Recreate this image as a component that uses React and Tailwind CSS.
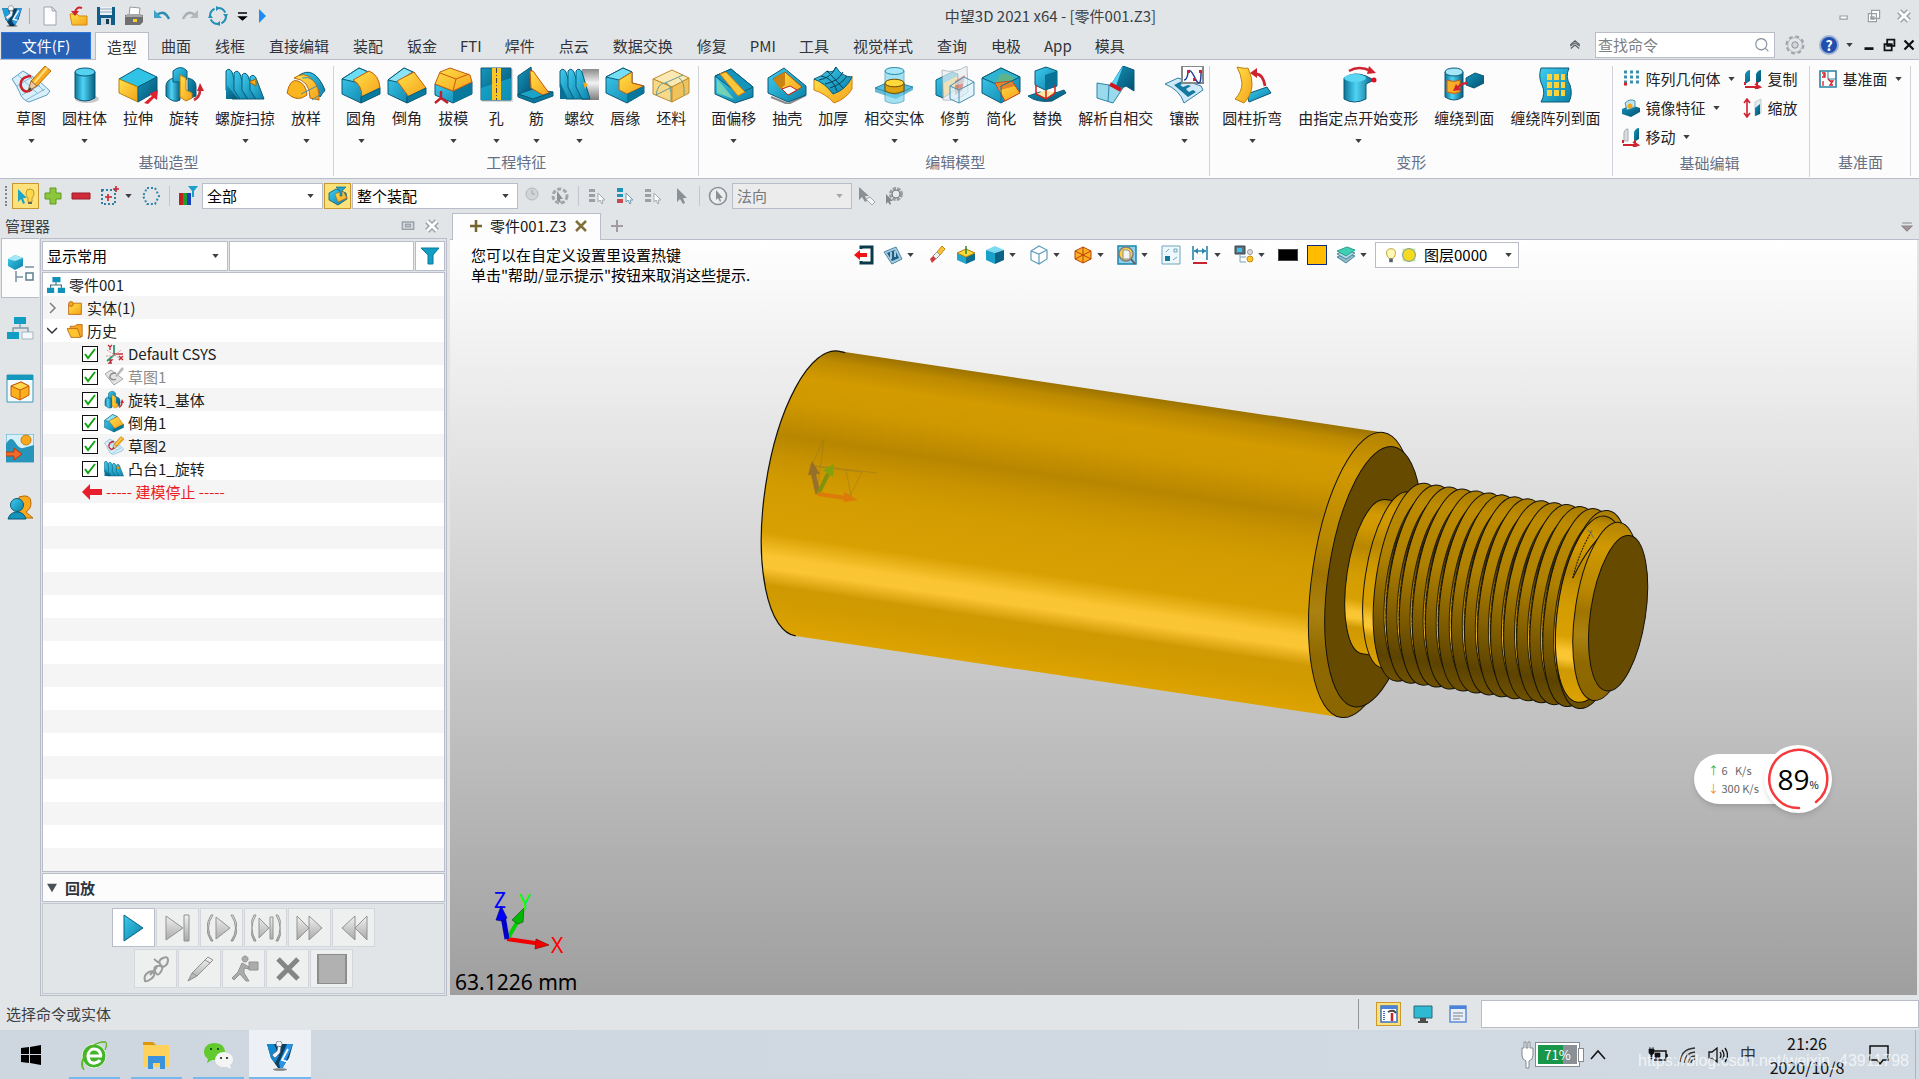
import { useState } from 'react';

// Shared gradients, referenced by every icon and by the model
function SharedDefs() {
  return (
    <svg className="absolute size-0" aria-hidden="true">
      <defs>
        <linearGradient id="blue" x1="0" y1="0" x2="1" y2="1">
          <stop offset="0" stopColor="#3fcdf0" />
          <stop offset="1" stopColor="#0a7fa6" />
        </linearGradient>
        <linearGradient id="blueDark" x1="0" y1="0" x2="1" y2="1">
          <stop offset="0" stopColor="#1596bd" />
          <stop offset="1" stopColor="#03506f" />
        </linearGradient>
        <linearGradient id="cyl" x1="0" y1="0" x2="1" y2="0">
          <stop offset="0" stopColor="#0c7499" />
          <stop offset="0.4" stopColor="#4fd4f5" />
          <stop offset="1" stopColor="#065f80" />
        </linearGradient>
        <linearGradient id="gold" x1="0" y1="0" x2="1" y2="1">
          <stop offset="0" stopColor="#ffe14a" />
          <stop offset="1" stopColor="#f5a21c" />
        </linearGradient>
        <linearGradient id="metal" x1="0" y1="0" x2="0" y2="1">
          <stop offset="0" stopColor="#8a8a8a" />
          <stop offset="0.45" stopColor="#f2f2f2" />
          <stop offset="1" stopColor="#7c7c7c" />
        </linearGradient>
        <linearGradient id="grayBtn" x1="0" y1="0" x2="0" y2="1">
          <stop offset="0" stopColor="#f2f2f2" />
          <stop offset="1" stopColor="#a8a8a8" />
        </linearGradient>
        <linearGradient id="body" x1="0" y1="0" x2="0" y2="1">
          <stop offset="0" stopColor="#9c7300" />
          <stop offset="0.04" stopColor="#bd8a00" />
          <stop offset="0.11" stopColor="#d39b00" />
          <stop offset="0.2" stopColor="#cf9800" />
          <stop offset="0.318" stopColor="#b88700" />
          <stop offset="0.4" stopColor="#c89300" />
          <stop offset="0.5" stopColor="#d39c00" />
          <stop offset="0.66" stopColor="#d9a002" />
          <stop offset="0.74" stopColor="#fac532" />
          <stop offset="0.78" stopColor="#fbc634" />
          <stop offset="0.84" stopColor="#cf9903" />
          <stop offset="0.9" stopColor="#d29b00" />
          <stop offset="1" stopColor="#dda300" />
        </linearGradient>
        <linearGradient id="chamfer" x1="0" y1="0" x2="0" y2="1">
          <stop offset="0" stopColor="#b38300" />
          <stop offset="0.15" stopColor="#d09900" />
          <stop offset="0.4" stopColor="#b88700" />
          <stop offset="0.52" stopColor="#a07400" />
          <stop offset="0.65" stopColor="#ab8210" />
          <stop offset="0.8" stopColor="#8f6900" />
          <stop offset="1" stopColor="#8b6600" />
        </linearGradient>
        <linearGradient id="flank" x1="0" y1="0" x2="0" y2="1">
          <stop offset="0" stopColor="#a97c00" />
          <stop offset="0.1" stopColor="#bd8b00" />
          <stop offset="0.4" stopColor="#ae8000" />
          <stop offset="0.6" stopColor="#8c6600" />
          <stop offset="0.88" stopColor="#5c4300" />
          <stop offset="1" stopColor="#6f5100" />
        </linearGradient>
        <linearGradient id="groove" x1="0" y1="0" x2="0" y2="1">
          <stop offset="0" stopColor="#6b5000" />
          <stop offset="0.3" stopColor="#3d2e00" />
          <stop offset="0.6" stopColor="#c08c00" />
          <stop offset="0.75" stopColor="#fbc634" />
          <stop offset="0.88" stopColor="#b28200" />
          <stop offset="1" stopColor="#3b2b00" />
        </linearGradient>
      </defs>
    </svg>
  );
}

const EDGE = '#0b5a78';

// Large ribbon drawings, all on a 40 x 38 grid
const BIG = {
  sketch: (
    <>
      <path d="M1 13 12 5l15 9 12 11-3 4-18 7q-7-2-9-9Q6 20 1 13Z" fill="#d9eff9" stroke="#5c9fc2" />
      <path d="m7 9 19 18M15 7l18 18M6 20l15-9M11 29l18-10M15 34l19-11" stroke="#7fb9d6" fill="none" />
      <path d="M20 10Q8 11 10 21q4 8 11 2" fill="none" stroke="#cf1f2a" strokeWidth="2.6" />
      <path d="m34 0 6 5-14 15-6-5Z" fill="#f8a81d" stroke="#b86f08" />
      <path d="m36 2-13 15" stroke="#ffdf7c" strokeWidth="2" />
      <path d="m20 15 6 5-9 5Z" fill="#f0c79a" stroke="#9a6b3a" />
      <path d="m19 21 1 2-3 2Z" fill="#222" />
    </>
  ),
  cylinder: (
    <>
      <ellipse cx="22" cy="33" rx="12" ry="4" fill="#0003" />
      <path d="M10 6v26q10 6 20 0V6Z" fill="url(#cyl)" stroke={EDGE} />
      <ellipse cx="20" cy="6" rx="10" ry="4" fill="#55d2f0" stroke={EDGE} />
    </>
  ),
  extrude: (
    <>
      <path d="M1 13 20 2l19 9-19 10Z" fill="#31c3e6" stroke={EDGE} />
      <path d="m1 13 19 8v15L1 27Z" fill="url(#gold)" stroke="#b8860b" />
      <path d="m20 21 19-10v14L20 36Z" fill="url(#blueDark)" stroke={EDGE} />
      <path d="m26 37 8-7-3-2 9-4-1 10-3-2-6 6Z" fill="#dd2230" />
    </>
  ),
  revolve: (
    <>
      <path d="M10 12Q2 14 2 20v10q8 8 14 4V12Z" fill="url(#cyl)" stroke={EDGE} />
      <path d="M24 12q8 2 8 8v10l-8 3Z" fill="url(#blueDark)" stroke={EDGE} />
      <path d="M9 5q8-7 14 0v8l-5 3H9Z" fill="url(#blue)" stroke={EDGE} />
      <path d="m16 9 6 3v12l6 3v5l-6 3-6-4Z" fill="url(#gold)" stroke="#c07a08" />
      <path d="M30 34q6-3 6-10" fill="none" stroke="#c9303a" strokeWidth="2.6" />
      <path d="m33 25 3-8 4 8Z" fill="#d3202b" />
    </>
  ),
  sweep: (
    <>
      {[0, 8, 16, 24].map((x) => (
        <path key={x} d={`M${1 + x} ${5 + x / 4}q3-4 6 1l8 ${27 - x / 4}h-8l-6-9Z`} fill="url(#blue)" stroke={EDGE} />
      ))}
      <path d="M1 18v15h12Z" fill="url(#blueDark)" />
      <path d="m24 16 7-3v7Z" fill="#f8a81d" stroke="#a56505" />
    </>
  ),
  loft: (
    <>
      <path d="M12 10q16-12 27 14l-5 7q-10-18-22-21Z" fill="url(#blue)" stroke={EDGE} />
      <path d="M8 12q10-7 18 1t7 21l-9-2Q24 14 8 12Z" fill="url(#gold)" stroke="#b9680a" />
      <path d="M1 27Q4 12 12 15t9 14q-10 8-20-2Z" fill="#fbb51f" stroke="#b9680a" />
      <path d="M16 12q12-4 20 16M15 28l20-10M26 34l13-9" fill="none" stroke="#3c8fae" />
    </>
  ),
  fillet: (
    <>
      <path d="M1 13 18 2l12 5-9 8-1 22L1 28Z" fill="url(#blue)" stroke={EDGE} />
      <path d="M1 13 18 2l14 6-18 8Z" fill="#6adcf3" stroke={EDGE} />
      <path d="M12 14 28 5q10 4 11 17l-18 9q0-12-9-17Z" fill="url(#gold)" stroke="#c8590b" />
      <path d="m20 31 19-9v6L20 37Z" fill="#077a9f" stroke={EDGE} />
    </>
  ),
  chamfer: (
    <>
      <path d="M1 14 17 2l11 5-8 9v21L1 28Z" fill="url(#blue)" stroke={EDGE} />
      <path d="M1 14 17 2l9 4-16 10Z" fill="#8be4f6" stroke={EDGE} />
      <path d="M10 15 27 6l12 16-17 9Z" fill="url(#gold)" stroke="#c8590b" />
      <path d="m20 31 19-9v6L20 37Z" fill="#077a9f" stroke={EDGE} />
    </>
  ),
  draft: (
    <>
      <path d="m2 18 18 7 19-9v12L20 37 2 29Z" fill="url(#blue)" stroke={EDGE} />
      <path d="m20 25 19-9v12L20 37Z" fill="#08799d" />
      <path d="m2 18 5-12 10-4 20 7 2 7-19 9Z" fill="url(#gold)" stroke="#c8590b" />
      <path d="m7 7 16 6 13-5M23 13l-3 12" fill="none" stroke="#c8590b" />
      <path d="M8 25v7m0 0-6 5m6-5 7 5" stroke="#c51e2a" strokeWidth="2.4" fill="none" />
    </>
  ),
  hole: (
    <>
      <path d="M6 3h31v33H6Z" fill="#0002" />
      <path d="M5 2h30v32H5Z" fill="url(#blueDark)" stroke={EDGE} />
      <path d="M5 22 35 12v22H5Z" fill="#17b5de" opacity=".6" />
      <path d="M16 2h9v32h-9Z" fill="#f9c626" />
      <path d="M20.500 2v32" stroke="#444" strokeDasharray="5 2 1 2" />
    </>
  ),
  rib: (
    <>
      <path d="m2 10 13-9 3 24-2 4-14 1Z" fill="url(#blueDark)" stroke={EDGE} />
      <path d="m2 28 15-5 20 3-20 7Z" fill="#1ba3c8" stroke={EDGE} />
      <path d="m14 5 3 0 16 22-6 2-12-7Z" fill="url(#gold)" stroke="#c8590b" />
      <path d="m2 28 15 5 20-7v4l-19 7-16-6Z" fill="#0a789c" stroke={EDGE} />
    </>
  ),
  thread: (
    <>
      <path d="M23 3h17v31H23Z" fill="url(#metal)" />
      {[0, 8, 16].map((x) => (
        <path key={x} d={`M${1 + x} 5q3-4 6 1l8 27h-8l-6-12Z`} fill="url(#blue)" stroke={EDGE} />
      ))}
      <path d="M1 16v17h8Z" fill="#0a6f93" />
      <path d="m24 16 5 2-3 5Z" fill="#f8a81d" />
    </>
  ),
  lip: (
    <>
      <path d="m1 11 17-9 9 4v11l12 3v7L22 37 1 27Z" fill="url(#blue)" stroke={EDGE} />
      <path d="M1 11 18 2l9 4-13 8Z" fill="#74dff4" stroke={EDGE} />
      <path d="m14 14 13-8v11l12 3-17 8-8-4Z" fill="url(#gold)" stroke="#c8590b" />
      <path d="m22 28 17-8v7L22 37Z" fill="#07789c" />
    </>
  ),
  stock: (
    <g stroke="#c08a2d">
      <path d="M2 13 21 4l17 8-17 9Z" fill="#fae9b4" />
      <path d="m2 13 19 8v15L2 28Z" fill="#f7d987" />
      <path d="m21 21 17-9v15l-17 9Z" fill="#f0c25b" />
      <path d="M5 29q2-12 9-12t6 18M14 17l18-8m-4 3q6 3 5 17M5 29l16-8" fill="none" stroke="#6a9a8c" />
    </g>
  ),
  faceOffset: (
    <>
      <path d="M1 10 17 3l22 18v10L21 37 1 28Z" fill="url(#blue)" stroke={EDGE} />
      <path d="M1 10 17 3l22 18-14 7Z" fill="#1695bb" stroke={EDGE} />
      <path d="m6 8 6-2 19 20-7 4Z" fill="#fbc73a" stroke="#ce7b10" />
      <path d="m3 13 17 20-17-6Z" fill="#86d9ad" opacity=".8" />
    </>
  ),
  shell: (
    <>
      <path d="m4 31 17 7 18-9" fill="none" stroke="#888" strokeWidth="2" />
      <path d="M1 12 17 2l22 18v9L21 36 1 27Z" fill="url(#blue)" stroke={EDGE} />
      <path d="m6 13 12-7 17 15-13 8Z" fill="url(#gold)" stroke="#a55304" />
      <path d="m15 23 8-3 7 4-9 5Z" fill="#fff" stroke="#bb2828" />
      <path d="m6 13 12-7v13l-5 4Z" fill="#c88313" />
    </>
  ),
  thicken: (
    <>
      <path d="M1 13v11q12 4 20 13 12-4 18-14V10q-7 14-19 16Q14 16 1 13Z" fill="url(#gold)" stroke="#cf7e10" />
      <path d="M1 13Q10 10 14 5q6 3 9-4 6 10 16 10-6 13-19 17Q12 17 1 13Z" fill="url(#blue)" stroke={EDGE} />
      <path d="M6 14Q18 12 23 1M12 18q14-3 18-12M17 22q12-4 17-12M8 10q12 2 16 15M14 5q8 8 16 17" stroke="#063f56" fill="none" />
    </>
  ),
  intersect: (
    <>
      <path d="m1 22 16-7 22 6-17 8Z" fill="#59bfdf" stroke="#2688aa" />
      <path d="M1 22v4l21 7 17-9v-3l-17 8Z" fill="#2a9dc2" opacity=".7" />
      <path d="M11 5v30q9 5 19 0V5Z" fill="#6ad0ec" opacity=".6" stroke="#2688aa" />
      <ellipse cx="20.500" cy="5" rx="9.500" ry="3.500" fill="#a8e7f7" stroke="#2688aa" />
      <path d="M11 17v8q9 5 19 0v-8Z" fill="#dca40e" stroke="#6c4b00" />
      <ellipse cx="20.500" cy="17" rx="9.500" ry="3.800" fill="#ffd83c" stroke="#6c4b00" />
    </>
  ),
  trim: (
    <>
      <path d="m1 14 16-8 6 2v14L8 32l-7-3Z" fill="url(#blue)" stroke={EDGE} />
      <path d="m9 17 13-7v12L9 31Z" fill="#fbc73a" />
      <path d="M7 4q12 4 25-4l1 26q-12 10-25 8Z" fill="#e9edf0" opacity=".7" stroke="#9aa5ad" />
      <path d="m20 15 10-6-3 16-7 4Z" fill="#cf5a42" opacity=".6" />
      <path d="m15 20 14-9 10 5v13l-15 8-9-4ZM15 20l9 4 15-8M24 24v13" fill="#d4eefa99" stroke="#4a90b2" />
    </>
  ),
  simplify: (
    <>
      <path d="M1 12 20 2l19 9v15L20 37 1 27Z" fill="url(#blue)" stroke={EDGE} />
      <path d="M1 12 20 2l19 9-19 9Z" fill="#2fb3cf" stroke={EDGE} />
      <path d="m14 17 6-9q8-1 13 4l-2 3Z" fill="#5db38a" />
      <path d="m14 17 17-2 8 12-15 8Z" fill="url(#gold)" stroke="#cd3a18" />
      <path d="m14 17 17-2 3 5-15 4Z" fill="#d9652a" opacity=".7" />
      <path d="m20 20 19-9M20 20v17" stroke="#0d7290" />
    </>
  ),
  replace: (
    <>
      <path d="M8 5 19 1l11 4v15l-12 4-10-5Z" fill="url(#blue)" stroke={EDGE} />
      <path d="M18 9 30 5v15l-12 4Z" fill="#087396" />
      <path d="m1 30 12-4q10 4 24-2l2 3-14 8Q10 37 1 30Z" fill="url(#blueDark)" stroke={EDGE} />
      <path d="m9 28 10-4 9 3-9 6Z" fill="#ffe9a0" />
      <path d="M9 19v9l10 5 9-6v-8M19 24v9" fill="none" stroke="#cf2020" strokeWidth="1.500" />
    </>
  ),
  selfIntersect: (
    <>
      <path d="m27 0 11 4v21l-8-5-6 3-9-4Z" fill="url(#blueDark)" stroke={EDGE} />
      <path d="m27 0-7 20-5-2Z" fill="#59d3ef" />
      <path d="m1 17 12 2 14 3-10 15L1 32Z" fill="#9bd9ec" stroke="#2c86a6" />
      <path d="m13 19-1 17" stroke="#2c86a6" />
      <path d="m14 18 11 6" stroke="#d2141e" strokeWidth="4" />
    </>
  ),
  emboss: (
    <>
      <path d="M1 18 14 12l23 8 2 4-19 13Q16 24 1 18Z" fill="#cfeaf7" stroke="#2f7fa4" />
      <path d="m10 19 8-4 3 2-5 2 3 2 5-2 3 1-5 3 3 3 4-2 3 2-8 5Z" fill="#1379a0" />
      <path d="M18 0h21v17H18Z" fill="#fff" stroke="#888" strokeWidth="2" />
      <path d="M20 14q3 0 4-7t7 5 6-5" fill="none" stroke="#1c3f9b" strokeWidth="1.500" />
      <path d="M23 4h3v3h-3ZM29 12h3v3h-3ZM35 4h3v3h-3Z" fill="#d3202b" />
    </>
  ),
  cylBend: (
    <>
      <path d="m15 28 20-7 4 6-22 9Z" fill="url(#blue)" stroke={EDGE} />
      <path d="M5 1q9 2 11 1 5 10 4 18-1 10-8 17L3 33q7-7 7-16Q9 8 5 1Z" fill="url(#gold)" stroke="#b9820b" />
      <path d="M22 8q9-1 11 12" fill="none" stroke="#cf2330" strokeWidth="2.600" />
      <path d="m18 7 7-5v10Z" fill="#cf2330" />
    </>
  ),
  pointMorph: (
    <>
      <path d="M6 12v21q10 6 22 0V18l8-4-8-4q-12-5-22 2Z" fill="url(#cyl)" stroke={EDGE} />
      <ellipse cx="17" cy="12" rx="11" ry="4" fill="#5ad5f2" />
      <path d="M11 5q10-6 22 0" fill="none" stroke="#cf2330" strokeWidth="2.600" />
      <path d="m31 0 7 7-9 1Z" fill="#cf2330" />
      <circle cx="36" cy="14" r="2.500" fill="#e01020" />
    </>
  ),
  wrapFace: (
    <>
      <path d="M1 6v25q9 6 18 0V6Z" fill="url(#cyl)" stroke={EDGE} />
      <ellipse cx="10" cy="6" rx="9" ry="4" fill="#a5e6f7" stroke={EDGE} />
      <path d="M3 14q7 3 13 0v12q-6 3-13 0Z" fill="#f9ad24" stroke="#c85e10" />
      <path d="m22 12 9-5 9 3v7l-10 5-8-3Z" fill="url(#blueDark)" stroke={EDGE} />
      <path d="M24 17q-8 0-11 6" fill="none" stroke="#cf2330" strokeWidth="2.400" />
      <path d="m9 25 3-7 5 6Z" fill="#cf2330" />
    </>
  ),
  wrapPattern: (
    <>
      <path d="M6 2h28q-4 9 1 17 3 9-1 17H6q5-9 1-17-4-8-1-17Z" fill="url(#blue)" stroke={EDGE} />
      {[8, 16, 24].map((y) => (
        <path key={y} d={`M12 ${y}h5v6h-5ZM19 ${y}h5v6h-5ZM26 ${y}h4v6h-4Z`} fill="#ffd23a" />
      ))}
    </>
  ),
};

// Small drawings, all on a 20 x 20 grid
const SMALL = {
  logo: (
    <>
      <path d="M1 3h18l-3 10-4 6H8l-4-6Z" fill="#0b3f5e" />
      <path d="M1 3h5l3 8-3 4-2-2Z" fill="#1aa0dc" />
      <path d="m19 3-6 16-3-4 5-12Z" fill="#2b9be6" />
      <circle cx="9" cy="3" r="2.500" fill="#f2f5f7" stroke="#667" strokeWidth=".5" />
      <path d="m8 5 3 1-1 4-4 3-2-2 4-3Z" fill="#eef3f6" stroke="#667" strokeWidth=".5" />
      <path d="m16 5-5 8 4 1" fill="none" stroke="#f4f8fa" strokeWidth="1.300" />
      <ellipse cx="10" cy="19" rx="5" ry="1" fill="#0005" />
    </>
  ),
  newDoc: <path d="M4 1h8l4 4v14H4ZM12 1v4h4" fill="#fdfdff" stroke="#9aa4b4" />,
  open: (
    <>
      <path d="M2 8h7l2 2h8v9H4Z" fill="url(#gold)" stroke="#d48a0a" />
      <path d="M14 2Q8 0 7 7" fill="none" stroke="#d3202b" strokeWidth="2" />
      <path d="m3 5 8 0-4 5Z" fill="#d3202b" />
    </>
  ),
  save: (
    <>
      <path d="M1 1h18v18H1Z" fill="#135e88" />
      <path d="M4 1h12v8H4Z" fill="#eef3f7" />
      <path d="M4 3h12M4 6h12" stroke="#8fa6b7" />
      <path d="M5 12h10v7H5Z" fill="#cfd8de" />
      <path d="M10 13h3v5h-3Z" fill="#173a50" />
    </>
  ),
  print: (
    <>
      <path d="m6 1 10 1-1 8H5Z" fill="#fff" stroke="#999" />
      <path d="M1 9h18v7l-3 3H1Z" fill="#6f6f6f" />
      <path d="M3 8h14l2 3H1Z" fill="#a7a7a7" />
      <path d="M9 13h4v3H9Z" fill="#f3d12b" />
    </>
  ),
  undo: (
    <>
      <path d="M5 9q7-6 12 4" fill="none" stroke="#2a8cb0" strokeWidth="2.400" />
      <path d="M2 4v8h8Z" fill="#3ba3c7" />
    </>
  ),
  redo: (
    <>
      <path d="M15 9Q8 3 3 13" fill="none" stroke="#a9afb3" strokeWidth="2.400" />
      <path d="M18 4v8h-8Z" fill="#b3b8bb" />
    </>
  ),
  sync: (
    <>
      <circle cx="10" cy="10" r="8" fill="none" stroke="#2490b3" strokeWidth="2" strokeDasharray="9 3.500" />
      <path d="M8 0v5l4-3ZM20 8h-5l3 4ZM12 20v-5l-4 3ZM0 12h5L2 8Z" fill="#2490b3" />
    </>
  ),
  custom: <path d="M6 7h9M7 11h7l-3.500 3Z" stroke="#000" strokeWidth="1.300" fill="#000" />,
  play: <path d="M7 3v14l7-7Z" fill="#1e8df0" />,
  pickLight: (
    <>
      <path d="m2 3 0 13 3-3 2 5 2-1-2-5h4Z" fill="#1aa5c9" />
      <path d="M14 3q4 0 4 4 0 3-2 5v4h-4v-4q-2-2-2-5 0-4 4-4Z" fill="#ffd84a" stroke="#c1962b" />
      <path d="M12 16h4v2h-4Z" fill="#666" />
    </>
  ),
  plus: <path d="M7 2h6v5h5v6h-5v5H7v-5H2V7h5Z" fill="#8cc63c" stroke="#5f9b21" />,
  minus: <path d="M1 7h18v6H1Z" fill="#d12b39" stroke="#9c1c28" />,
  pickBox: (
    <>
      <path d="M3 4h13v14H3Z" fill="none" stroke="#2f7ea3" strokeWidth="2" strokeDasharray="2 2" />
      <path d="M9 8v7M6 11h7M17 0v6M14 3h6" stroke="#cf2330" strokeWidth="1.600" />
    </>
  ),
  pickHex: <path d="M6 2h8l4 8-4 8H6l-4-8Z" fill="none" stroke="#2a86ab" strokeWidth="2" strokeDasharray="2 2" />,
  colorFilter: (
    <>
      <path d="M1 7h4v12H1Z" fill="#c02020" />
      <path d="M5 7h4v12H5Z" fill="#1ca02c" />
      <path d="M9 7h4v12H9Z" fill="#1c3fc0" />
      <path d="M10 0h10l-4 5v6h-2V5Z" fill="#1aa0c9" />
    </>
  ),
  pickBody: (
    <>
      <path d="m1 7 7-4 10 4 1 6-9 6-9-5Z" fill="url(#blue)" stroke={EDGE} strokeWidth=".8" />
      <path d="m7 8 8-3 4 7-9 4Z" fill="url(#gold)" stroke="#c8590b" strokeWidth=".6" />
      <path d="M8 1h10l-4 4v5h-2V5Z" fill="#20a6cd" stroke={EDGE} strokeWidth=".6" />
    </>
  ),
  clock: (
    <>
      <circle cx="10" cy="8" r="6" fill="#d2d5d7" stroke="#b3b7ba" />
      <path d="M10 4v4h3" fill="none" stroke="#a3a7aa" />
    </>
  ),
  gearArrows: (
    <>
      <circle cx="10" cy="10" r="7" fill="none" stroke="#a2a6a9" strokeWidth="3" strokeDasharray="4 2" />
      <path d="m7 5 6 8-3 0 1 4-2-1-2-2Z" fill="#8e9295" />
    </>
  ),
  listGray: (
    <>
      <path d="M2 3h6v3H2ZM2 8h6v3H2ZM2 13h6v3H2Z" fill="#9ba0a4" />
      <path d="m11 7 0 9 2-2 2 4 1-1-1-3h3Z" fill="#fff" stroke="#a4a8ab" />
    </>
  ),
  listBlue: (
    <>
      <path d="M2 2h6v4H2ZM2 8h6v3H2Z" fill="#1c93b7" />
      <path d="M2 13h6v4H2Z" fill="#c24a50" />
      <path d="m11 7 0 9 2-2 2 4 1-1-1-3h3Z" fill="#fff" stroke="#6f9bb3" />
    </>
  ),
  cursorGray: <path d="m6 2 0 14 3-3 3 5 2-1-2-5h4Z" fill="#8b9094" />,
  cursorCircle: (
    <>
      <circle cx="10" cy="10" r="8.500" fill="#eceef0" stroke="#8d9195" strokeWidth="1.600" />
      <path d="m8 4 0 10 2-2 2 4 1-1-1-3h3Z" fill="#8b9094" />
    </>
  ),
  cursorTag: (
    <>
      <path d="m3 1 0 13 3-3 3 5 2-1-2-5h4Z" fill="#8b9094" />
      <path d="m10 13 4-2 5 5-3 3Z" fill="#f3f4f5" stroke="#a3a7aa" />
    </>
  ),
  cursorGear: (
    <>
      <circle cx="12" cy="8" r="5" fill="none" stroke="#9b9fa2" strokeWidth="4" strokeDasharray="3 1" />
      <circle cx="12" cy="8" r="4" fill="#e7eaec" stroke="#777" />
      <path d="m2 8 0 10 2-2 2 3 1-1-1-3h3Z" fill="#85898c" />
    </>
  ),
  patternGeom: (
    <>
      {[3, 8, 13].map((y) => (
        <path key={y} d={`M3 ${y}h3M9 ${y}h3M15 ${y}h3`} stroke="#3a8fb0" strokeWidth="3" />
      ))}
      <path d="M3 15h3" stroke="#d3202b" strokeWidth="3" />
    </>
  ),
  mirror: (
    <>
      <path d="m1 11 9-4 9 3v4l-9 5-9-3Z" fill="url(#blueDark)" />
      <path d="M4 5q5-5 10-2v6l-8 3Z" fill="#bfe3f0" stroke="#4b93b0" />
      <circle cx="9" cy="8" r="2.500" fill="#f6a81c" />
    </>
  ),
  move: (
    <>
      <path d="M3 5q2-4 4-3v12H3Z" fill="#d8dde0" stroke="#a9b0b5" />
      <path d="M13 5q2-4 5-4v11l-5 3Z" fill="url(#blueDark)" />
      <path d="M2 18h13m-3-3 5 3-5 2" stroke="#cf2330" strokeWidth="2" fill="none" />
      <path d="M1 13h2v3H1ZM13 13h2v3h-2Z" fill="#cf2330" />
    </>
  ),
  copy: (
    <>
      <path d="M2 5q2-4 5-4v11l-5 3ZM13 5q2-4 5-4v11l-5 3Z" fill="url(#blueDark)" />
      <path d="M2 18h13m-3-3 5 3-5 2" stroke="#cf2330" strokeWidth="2" fill="none" />
      <path d="M1 13h2v3H1ZM13 13h2v3h-2Z" fill="#cf2330" />
    </>
  ),
  scale: (
    <>
      <path d="M4 2v16M1 5l3-4 3 4M1 15l3 4 3-4" stroke="#cf2330" strokeWidth="1.600" fill="none" />
      <path d="m12 4 6-3v14l-6 3Z" fill="#e6ebee" stroke="#c3cad0" />
      <path d="m12 10 5-4v10l-5 2Z" fill="url(#blueDark)" />
    </>
  ),
  datum: (
    <>
      <path d="M2 2h16v16H2Z" fill="#fff" stroke="#2683a6" strokeWidth="1.600" />
      <path d="M10 2v8h8" fill="none" stroke="#2683a6" />
      <path d="M4 4h3v2H5h2v2H4M5 12v5M12 12h3l-3 4h3M10 10l3 3" fill="none" stroke="#d3202b" strokeWidth="1.300" />
    </>
  ),
  gear: (
    <>
      <circle cx="10" cy="10" r="7" fill="none" stroke="#a0a4a8" strokeWidth="5" strokeDasharray="3.200 2.300" />
      <circle cx="10" cy="10" r="5.500" fill="none" stroke="#e3e6e8" strokeWidth="4" />
      <circle cx="10" cy="10" r="7.300" fill="none" stroke="#a5a9ad" strokeWidth=".8" />
      <circle cx="10" cy="10" r="3.200" fill="#d3d7da" stroke="#8f9397" />
    </>
  ),
  collapse: <path d="m4 9 6-5 6 5v2l-6-4-6 4ZM4 15l6-5 6 5" fill="none" stroke="#555b61" strokeWidth="1.500" />,
  search: <path d="M9 2a7 7 0 1 0 .1 0ZM14 14l4 4" fill="none" stroke="#8a94a0" strokeWidth="1.500" />,
  minGray: <path d="M5 10h9v4H5Z" fill="#fff" stroke="#9a9ea2" strokeWidth="1.500" />,
  restoreGray: <path d="M7 3h10v10H7ZM3 7h10v10H3ZM6 11h4v3H6Z" fill="#fff" stroke="#9a9ea2" strokeWidth="1.500" />,
  closeGray: (
    <>
      <path d="m4 4 12 12M16 4 4 16" stroke="#9a9ea2" strokeWidth="7" />
      <path d="m4 4 12 12M16 4 4 16" stroke="#fff" strokeWidth="3.500" />
    </>
  ),
  minBlack: <path d="M5 14h10" stroke="#111" strokeWidth="3" />,
  restoreBlack: <path d="M8 4h8v7H8ZM5 9h8v7H5Z" fill="#e1e5e8" stroke="#111" strokeWidth="2" />,
  closeBlack: <path d="m5 5 10 10M15 5 5 15" stroke="#111" strokeWidth="2.500" />,
  exit: (
    <>
      <path d="M7 4V2h11v16H7v-2" fill="none" stroke="#0b3a4a" strokeWidth="3" />
      <path d="m0 10 6-5v3h7v4H6v3Z" fill="#f01414" />
    </>
  ),
  viewBook: (
    <>
      <path d="m1 7 12-5 6 12-10 5Z" fill="#a9cbe0" stroke="#4e86a6" />
      <path d="m4 8 8-3 4 8-7 3Z" fill="#1c5f86" />
      <path d="M8 7v7M12 6v6" stroke="#d4ebf7" strokeWidth="1.500" />
    </>
  ),
  eraser: (
    <>
      <path d="m10 7 5-6 3 3-5 6Z" fill="#f7c33b" stroke="#c28a0b" />
      <path d="m6 11 4-4 3 3-4 4Z" fill="#f0f0f0" stroke="#999" />
      <path d="m3 14 3-3 3 3-4 4Z" fill="#d33a3f" />
    </>
  ),
  boxTop: (
    <>
      <path d="m1 8 9 4v7l-9-4Z" fill="#22a6cb" />
      <path d="m10 12 9-4v7l-9 4Z" fill="#0a6f92" />
      <path d="m1 8 9-4 9 4-9 4Z" fill="#ffd83a" stroke="#a87f10" />
      <path d="M10 1v8" stroke="#1c8f2a" strokeWidth="1.500" />
    </>
  ),
  shaded: (
    <>
      <path d="m1 5 9-4 9 4-9 3Z" fill="#7cdaf2" />
      <path d="m1 5 9 3v11l-9-4Z" fill="#1aa1c9" />
      <path d="m10 8 9-3v10l-9 4Z" fill="#0a6487" />
    </>
  ),
  wire: <path d="m2 6 8-5 8 4v9l-8 5-8-4ZM2 6l8 3 8-4M10 9v10" fill="#fff" stroke="#5f9dbd" strokeWidth="1.200" />,
  section: (
    <>
      <path d="m2 6 8-4 8 4v8l-8 4-8-4Z" fill="#fcb021" stroke="#b8400b" />
      <path d="m2 6 16 8M18 6 2 14M10 2v16" stroke="#b8400b" />
    </>
  ),
  zoomDoc: (
    <>
      <path d="M1 1h18v18H1Z" fill="#8dd2ea" stroke="#1a86ab" strokeWidth="1.500" />
      <circle cx="9" cy="9" r="7" fill="#ffd040" stroke="#7b7f83" strokeWidth="1.500" />
      <path d="M6 5h5l2 2v7H6Z" fill="#f2f4f6" stroke="#8a8f94" />
      <path d="m14 14 4 5" stroke="#5b5f63" strokeWidth="2" />
    </>
  ),
  fit: (
    <>
      <path d="M1 1h18v18H1Z" fill="#eef8fc" stroke="#6fa5bd" />
      <path d="M4 11h5v5H4Z" fill="#13789c" />
      <path d="M13 4h3v3h-3ZM5 7l3-3M12 15l4-3" fill="none" stroke="#6fa5bd" />
    </>
  ),
  dimension: (
    <>
      <path d="M3 1v14M17 1v14M4 6h12" stroke="#2a86ab" strokeWidth="1.600" />
      <path d="m4 6 4-3v6ZM16 6l-4-3v6Z" fill="#2a86ab" />
      <path d="M3 18h14" stroke="#c8232e" strokeWidth="2" />
    </>
  ),
  display: (
    <>
      <path d="M1 1h10v8H1Z" fill="#5a6f7c" stroke="#37444c" />
      <path d="M3 3h5v4H3Z" fill="#3fc0e4" />
      <path d="M6 10v7h6M6 12h6" fill="none" stroke="#7ba2b5" />
      <circle cx="16" cy="7" r="2.500" fill="#ddd" stroke="#999" />
      <circle cx="16" cy="14" r="3" fill="#fcc52e" stroke="#c88d0a" />
    </>
  ),
  layers: (
    <>
      <path d="m1 12 9-4 9 3-9 7Z" fill="#8fb9c9" stroke="#4a8ba3" />
      <path d="m1 9 9-4 9 3-9 6Z" fill="#b9dbe5" stroke="#4a8ba3" />
      <path d="m1 6 10-4 8 3-9 6Z" fill="#3fcfb4" stroke="#2b9f8b" />
    </>
  ),
  bulb: (
    <>
      <path d="M10 3q5 0 5 5 0 3-3 6H8q-3-3-3-6 0-5 5-5Z" fill="#fff7b5" stroke="#b99d2b" />
      <path d="M8 14h4v4H8Z" fill="#555f70" />
    </>
  ),
  sun: (
    <>
      <path d="M2 2h16v16H2Z" fill="#c4e7a0" />
      <circle cx="10" cy="10" r="8" fill="#f6da1f" stroke="#5c87b0" />
    </>
  ),
  tree: (
    <>
      <path d="M6 1h9v6H6ZM0 13h8v6H0ZM12 13h8v6h-8Z" fill="#1192b8" />
      <path d="M10 7v3M4 13v-3h12v3" fill="none" stroke="#4b6c7b" strokeWidth="1.300" />
    </>
  ),
  folder: (
    <>
      <path d="M2 6h4l2-2 10 0v14H2Z" fill="url(#gold)" stroke="#b5600b" />
      <circle cx="5" cy="5" r="3" fill="#f7a91e" stroke="#b5600b" />
    </>
  ),
  folderOpen: (
    <>
      <path d="M4 7V4h6l2-2h7v15H6" fill="#f7a823" stroke="#b5600b" />
      <path d="M0 7h13l4 11H5Z" fill="#ffc52e" stroke="#b5600b" />
    </>
  ),
  csys: (
    <>
      <path d="M10 1v10l-7 6" fill="none" stroke="#2b9b72" strokeWidth="1.800" />
      <path d="M10 10h9" stroke="#c8232e" strokeWidth="1.400" />
      <path d="m3 6 15 10M2 12h8l7-6" stroke="#c99" strokeDasharray="2 1" />
      <path d="m4 1 2 2 2-2M6 3v3M15 12l4 4m0-4-4 4M5 16h3l-3 3h3" stroke="#c22a33" strokeWidth="1.300" fill="none" />
    </>
  ),
  sketchGray: (
    <>
      <path d="m1 7 6-4 12 9-9 6Z" fill="#e4e4e4" stroke="#a6a6a6" />
      <path d="M12 6Q5 6 6 11q3 3 6 1" fill="none" stroke="#8a8a8a" strokeWidth="1.500" />
      <path d="m18 0 2 2-7 8-2-1Z" fill="#b9b9b9" />
    </>
  ),
  stopArrow: <path d="m0 10 8-8v5h12v6H8v5Z" fill="#e81e2d" />,
  filter: <path d="M1 2h18l-6 7v9H8V9Z" fill="#129ec4" stroke="#0b7b9b" />,
  pin: <path d="M3 5h14v9H3ZM7 8h6v3H7Z" fill="none" stroke="#9ba1aa" strokeWidth="2" />,
  tabMenu: <path d="M4 5h12M4 9h12l-6 6Z" stroke="#8f8588" strokeWidth="1.500" fill="#a2989b" />,
};

// Icons of the vertical manager strip, 28 x 29
const STRIP = [
  {
    label: '历史管理',
    art: (
      <>
        <path d="m1 5 7-4 8 3v8l-8 4-7-4Z" fill="url(#blue)" />
        <path d="m1 5 7-4 8 3-8 3Z" fill="#a9e6f6" />
        <path d="M18 13h9M9 17v11M9 23h7" stroke="#76919e" strokeWidth="1.500" fill="none" />
        <path d="M19 19h7v7h-7Z" fill="#fff" stroke="#5a7f91" strokeWidth="1.500" />
      </>
    ),
  },
  {
    label: '装配管理',
    art: (
      <>
        <path d="M8 3h12v7H8ZM1 18h12v7H1Z" fill="#129dc3" />
        <path d="M16 18h11v7H16Z" fill="#f2f8fb" stroke="#a4b5be" />
        <path d="M14 10v4M7 18v-4h15v4" fill="none" stroke="#7d99a6" strokeWidth="1.300" />
      </>
    ),
  },
  {
    label: '视图管理',
    art: (
      <>
        <path d="M1 1h26v27H1Z" fill="#f2fbfe" stroke="#3c97b8" />
        <path d="M1 1h26v5H1Z" fill="#1598bd" />
        <path d="m5 12 10-4 8 4v9l-9 5-9-4Z" fill="#fbb01d" stroke="#c8560c" />
        <path d="m5 12 10-4 8 4-9 4Z" fill="#ffd84a" stroke="#c8560c" />
        <path d="M14 16v10" stroke="#c8560c" />
      </>
    ),
  },
  {
    label: '视觉管理',
    art: (
      <>
        <path d="M0 0h28v28H0Z" fill="#d5f0fa" stroke="#4da3c3" />
        <path d="M0 10q5-9 9-2t8 6 11-3v17H0Z" fill="#2794bb" />
        <circle cx="20" cy="6" r="5" fill="#f8a81d" stroke="#c87d10" />
        <path d="M0 18h8v-4l8 6-8 6v-4H0Z" fill="#ef6a2d" stroke="#b73e0c" />
      </>
    ),
  },
  {
    label: '角色管理',
    art: (
      <>
        <path d="M13 3q12-4 12 6 0 6-5 9l7 6H12Z" fill="#f8a81d" stroke="#b76a08" />
        <circle cx="11" cy="11" r="6.500" fill="url(#blue)" stroke={EDGE} />
        <path d="M2 25q2-7 9-7t9 7Z" fill="#1394ba" stroke={EDGE} />
      </>
    ),
  },
];

function Icon({ name, className = 'size-5' }) {
  return (
    <svg viewBox="0 0 20 20" fill="none" className={`shrink-0 ${className}`} aria-hidden="true">
      {SMALL[name]}
    </svg>
  );
}

function BigIcon({ name, className }) {
  return (
    <svg viewBox="0 0 40 38" fill="none" className={`shrink-0 ${className}`} aria-hidden="true">
      {BIG[name]}
    </svg>
  );
}

function Caret({ className = '' }) {
  return (
    <svg viewBox="0 0 8 5" className={`h-1 w-[7px] shrink-0 ${className}`} aria-hidden="true">
      <path d="M0 0h8L4 5Z" fill="#3c4043" />
    </svg>
  );
}

function Combo({ label, value, className, disabled }) {
  return (
    <div className={`relative flex shrink-0 items-center border border-[#b9bdc9] bg-white ${className}`}>
      <select
        aria-label={label}
        disabled={disabled}
        className="h-full w-full appearance-none bg-transparent pr-5 pl-1 outline-none disabled:bg-[#ececec] disabled:text-[#75797c]"
      >
        <option>{value}</option>
      </select>
      <Caret className={disabled ? 'absolute right-2 opacity-40' : 'absolute right-2'} />
    </div>
  );
}

const MENU_TABS = [
  '造型', '曲面', '线框', '直接编辑', '装配', '钣金', 'FTI', '焊件', '点云', '数据交换',
  '修复', 'PMI', '工具', '视觉样式', '查询', '电极', 'App', '模具',
];

const RIBBON_GROUPS = [
  {
    title: '基础造型',
    pad: 'pl-2 pr-1',
    items: [
      ['草图', 'sketch', true],
      ['圆柱体', 'cylinder', true],
      ['拉伸', 'extrude', false],
      ['旋转', 'revolve', false],
      ['螺旋扫掠', 'sweep', true],
      ['放样', 'loft', true],
    ],
  },
  {
    title: '工程特征',
    pad: 'px-1',
    items: [
      ['圆角', 'fillet', true],
      ['倒角', 'chamfer', false],
      ['拔模', 'draft', true],
      ['孔', 'hole', true],
      ['筋', 'rib', true],
      ['螺纹', 'thread', true],
      ['唇缘', 'lip', false],
      ['坯料', 'stock', false],
    ],
  },
  {
    title: '编辑模型',
    pad: 'pl-1 pr-0.5',
    items: [
      ['面偏移', 'faceOffset', true],
      ['抽壳', 'shell', false],
      ['加厚', 'thicken', false],
      ['相交实体', 'intersect', true],
      ['修剪', 'trim', true],
      ['简化', 'simplify', false],
      ['替换', 'replace', false],
      ['解析自相交', 'selfIntersect', false],
      ['镶嵌', 'emboss', true],
    ],
  },
  {
    title: '变形',
    pad: 'px-1',
    items: [
      ['圆柱折弯', 'cylBend', true],
      ['由指定点开始变形', 'pointMorph', true],
      ['缠绕到面', 'wrapFace', false],
      ['缠绕阵列到面', 'wrapPattern', false],
    ],
  },
];

function TitleBar() {
  return (
    <div className="flex h-8 shrink-0 items-center">
      <Icon name="logo" className="ml-px size-[22px]" />
      <span className="mx-[6px] h-4 w-px bg-[#a9adb2]" />
      <div className="flex items-center">
        {['newDoc', 'open', 'save', 'print', 'undo', 'redo', 'sync'].map((n) => (
          <button key={n} aria-label={n} className="flex w-7 justify-center">
            <Icon name={n} />
          </button>
        ))}
        <button aria-label="custom" className="flex w-5 justify-center">
          <Icon name="custom" />
        </button>
        <button aria-label="play" className="flex w-5 justify-center">
          <Icon name="play" />
        </button>
      </div>
      <h1 className="flex-1 text-center text-[#3a3f44]">中望3D 2021 x64 - [零件001.Z3]</h1>
      <div className="flex items-center">
        {['minGray', 'restoreGray', 'closeGray'].map((n) => (
          <button key={n} aria-label={n} className="flex w-[30px] justify-center">
            <Icon name={n} className="size-4" />
          </button>
        ))}
      </div>
    </div>
  );
}

function MenuTabs({ active, onSelect }) {
  const tabClass = (t) => {
    if (t === active) return '-mb-px border border-b-0 border-[#b9bdc9] bg-[#fcfcfd] px-[11px]';
    return /^[A-Z]/.test(t) ? 'px-[11px]' : 'px-3';
  };
  return (
    <div className="flex h-7 shrink-0 items-stretch border-b border-[#b9bdc9] text-[#30343a]">
      <button className="mr-1 ml-px w-[90px] border border-[#2e75d9] bg-[#2860b4] text-white">文件(F)</button>
      {MENU_TABS.map((t) => (
        <button key={t} onClick={() => onSelect(t)} className={tabClass(t)}>
          {t}
        </button>
      ))}
      <div className="ml-auto flex items-center pb-0.5">
        <button aria-label="收起" className="flex w-10 justify-center">
          <Icon name="collapse" className="size-[14px]" />
        </button>
        <div className="flex h-[26px] w-[180px] items-center border border-[#b9bdc9] bg-white pr-1">
          <input
            aria-label="查找命令"
            placeholder="查找命令"
            className="min-w-0 flex-1 bg-transparent pl-0.5 outline-none placeholder:text-[#7b8085]"
          />
          <Icon name="search" className="size-4" />
        </div>
        <button aria-label="设置" className="flex w-10 justify-center">
          <Icon name="gear" />
        </button>
        <button aria-label="帮助" className="ml-1 flex size-5 items-center justify-center rounded-full border-2 border-[#9fb2d3] bg-[#1f4faf] text-sm leading-4 font-bold text-white">
          ?
        </button>
        <span className="flex w-5 justify-center">
          <Caret />
        </span>
        {['minBlack', 'restoreBlack', 'closeBlack'].map((n) => (
          <button key={n} aria-label={n} className="flex w-5 justify-center">
            <Icon name={n} className="size-[18px]" />
          </button>
        ))}
      </div>
    </div>
  );
}

function SmallCommand({ icon, label, caret }) {
  return (
    <button className="flex h-[29px] items-center gap-1 pb-[3px]">
      <Icon name={icon} />
      {label}
      {caret && <Caret className="ml-1" />}
    </button>
  );
}

function Ribbon() {
  return (
    <div className="flex h-[119px] shrink-0 border-b border-[#b9bdc9] bg-[#fcfcfd] text-[#1f2327]">
      {RIBBON_GROUPS.map((g) => (
        <section key={g.title} className="flex shrink-0 flex-col pt-[6px] pb-0.5">
          <div className={`flex flex-1 flex-col border-r border-[#cfd3da] ${g.pad}`}>
            <div className="flex flex-1 items-start">
              {g.items.map(([label, icon, caret]) => (
                <button key={label} className="flex flex-col items-center px-2">
                  <BigIcon name={icon} className="-mx-2 h-[38px] w-10" />
                  <span className="mt-1 h-5 leading-5 whitespace-nowrap">{label}</span>
                  {caret && <Caret className="mt-[11px]" />}
                </button>
              ))}
            </div>
            <h2 className="h-6 text-center leading-5 text-[#667085]">{g.title}</h2>
          </div>
        </section>
      ))}
      <section className="flex shrink-0 flex-col pt-[6px] pb-0.5">
        <div className="flex flex-1 flex-col border-r border-[#cfd3da] pr-3 pl-2">
          <div className="flex flex-1 gap-2">
            <div className="flex flex-col items-start">
              <SmallCommand icon="patternGeom" label="阵列几何体" caret />
              <SmallCommand icon="mirror" label="镜像特征" caret />
              <SmallCommand icon="move" label="移动" caret />
            </div>
            <div className="flex flex-col items-start">
              <SmallCommand icon="copy" label="复制" />
              <SmallCommand icon="scale" label="缩放" />
            </div>
          </div>
          <h2 className="h-6 text-center leading-5 text-[#667085]">基础编辑</h2>
        </div>
      </section>
      <section className="flex shrink-0 flex-col pt-[6px] pb-0.5">
        <div className="flex flex-1 flex-col border-r border-[#cfd3da] pr-2 pl-2">
          <div className="flex-1">
            <SmallCommand icon="datum" label="基准面" caret />
          </div>
          <h2 className="h-6 text-center leading-5 text-[#667085]">基准面</h2>
        </div>
      </section>
    </div>
  );
}

function ToolIcon({ name, caret }) {
  return (
    <button aria-label={name} className="flex shrink-0 items-center">
      <span className="flex w-7 justify-center">
        <Icon name={name} />
      </span>
      {caret && <Caret className="mr-[5px] ml-0.5" />}
    </button>
  );
}

function SelectionBar() {
  const sep = <span className="mx-1 h-5 w-px bg-[#c3c6cc]" />;
  return (
    <div className="flex h-[34px] shrink-0 items-center">
      <span className="mx-[5px] h-5 w-0.5 border-l-2 border-dotted border-[#7d8790]" />
      <button aria-label="高亮拾取" className="flex h-[26px] w-[27px] items-center justify-center border border-[#c9982f] bg-[#fde27c]">
        <Icon name="pickLight" />
      </button>
      <ToolIcon name="plus" />
      <ToolIcon name="minus" />
      <ToolIcon name="pickBox" caret />
      <ToolIcon name="pickHex" />
      {sep}
      <ToolIcon name="colorFilter" />
      <Combo label="过滤器" value="全部" className="h-[26px] w-[121px]" />
      <button aria-label="拾取实体" className="mx-px flex h-[26px] w-[27px] items-center justify-center border border-[#c9982f] bg-[#fde27c]">
        <Icon name="pickBody" />
      </button>
      <Combo label="范围" value="整个装配" className="h-[26px] w-[166px]" />
      <ToolIcon name="clock" />
      <ToolIcon name="gearArrows" />
      {sep}
      <ToolIcon name="listGray" />
      <ToolIcon name="listBlue" />
      <ToolIcon name="listGray" />
      <ToolIcon name="cursorGray" />
      {sep}
      <ToolIcon name="cursorCircle" />
      <Combo label="方向" value="法向" className="h-[26px] w-[120px]" disabled />
      <ToolIcon name="cursorTag" />
      <ToolIcon name="cursorGear" />
    </div>
  );
}

const FEATURES = [
  { id: 'csys', label: 'Default CSYS', icon: <Icon name="csys" /> },
  { id: 'sk1', label: '草图1', icon: <Icon name="sketchGray" />, muted: true },
  { id: 'rev1', label: '旋转1_基体', icon: <BigIcon name="revolve" className="h-5 w-5" /> },
  { id: 'ch1', label: '倒角1', icon: <BigIcon name="chamfer" className="h-5 w-5" /> },
  { id: 'sk2', label: '草图2', icon: <BigIcon name="sketch" className="h-5 w-5" /> },
  { id: 'boss1', label: '凸台1_旋转', icon: <BigIcon name="sweep" className="h-5 w-5" /> },
];

function FeatureRow({ feature }) {
  const [on, setOn] = useState(true);
  return (
    <label className={`flex items-center gap-1 pl-[39px] ${feature.muted ? 'text-[#8c8c8c]' : ''}`}>
      <span className="relative mr-0.5 flex size-4">
        <input
          type="checkbox"
          checked={on}
          onChange={() => setOn(!on)}
          className="size-4 appearance-none border border-[#111] bg-white"
        />
        {on && (
          <svg viewBox="0 0 16 16" className="pointer-events-none absolute inset-0 size-4" aria-hidden="true">
            <path d="m3 8 3 4 7-9" fill="none" stroke="#12a312" strokeWidth="2" />
          </svg>
        )}
      </span>
      {feature.icon}
      <span>{feature.label}</span>
    </label>
  );
}

function HistoryTree() {
  const rows = [
    <div key="root" className="flex items-center gap-1 pl-1">
      <Icon name="tree" className="size-[18px]" />
      零件001
    </div>,
    <div key="bodies" className="flex items-center gap-1 pl-1">
      <svg viewBox="0 0 16 16" className="size-4" aria-hidden="true">
        <path d="m3 3 5 5-5 5" fill="none" stroke="#7c7f83" strokeWidth="1.500" />
      </svg>
      <Icon name="folder" className="size-4" />
      实体(1)
    </div>,
    <div key="history" className="flex items-center gap-1 pl-1">
      <svg viewBox="0 0 16 16" className="size-4" aria-hidden="true">
        <path d="m0 5 5 5 5-5" fill="none" stroke="#30343a" strokeWidth="1.500" />
      </svg>
      <Icon name="folderOpen" className="size-4" />
      历史
    </div>,
    ...FEATURES.map((f) => <FeatureRow key={f.id} feature={f} />),
    <div key="stop" className="flex items-center gap-1 pl-[39px] text-[#ec1c24]">
      <Icon name="stopArrow" />
      <span>----- 建模停止 -----</span>
    </div>,
  ];
  const blanks = Array.from({ length: 16 });
  return (
    <ul className="mt-px min-h-0 flex-1 overflow-hidden border border-[#b9bdc9] bg-white text-[#1b1e21]">
      {rows.map((r) => (
        <li key={r.key} className="h-[23px] leading-[23px] even:bg-[#f5f5f5]">
          {r}
        </li>
      ))}
      {blanks.map((_, i) => (
        <li key={i} className="h-[23px] even:bg-[#f5f5f5]" />
      ))}
    </ul>
  );
}

const g = { fill: 'url(#grayBtn)', stroke: '#929292' };
const PLAYBACK = [
  [
    ['播放', <path key="a" d="M5 2v26l19-13Z" fill="url(#blue)" stroke="#0e5f7d" />],
    ['下一步', <path key="a" d="M3 3v24l17-12ZM21 2h5v26h-5Z" {...g} />],
    ['播放到', <path key="a" d="M9 4v22l14-11ZM6 2q-9 13 0 26h-2q-8-13 0-26ZM24 2q9 13 0 26h2q8-13 0-26Z" {...g} />],
    ['跳到', <path key="a" d="M8 5v20l10-10ZM19 4h3v22h-3ZM5 2q-8 13 0 26h-2q-7-13 0-26ZM25 2q8 13 0 26h2q7-13 0-26Z" {...g} />],
    ['快进', <path key="a" d="M2 3v24l12-12ZM14 3v24l13-12Z" {...g} />],
    ['快退', <path key="a" d="M28 3v24L16 15ZM16 3v24L3 15Z" {...g} />],
  ],
  [
    ['链接', <path key="a" d="M4 27q-2-6 4-9 4-2 5 1t-3 6-6 2ZM14 17q-2-4 2-5t5 1-2 6-5-2ZM19 10q-2-4 3-6t5 2-3 6-5-2ZM9 21l7-8M18 9l-5-4" fill="none" stroke="#9b9b9b" strokeWidth="2" />],
    ['编辑', <path key="a" d="m3 27 4-8L23 3l5 3L12 22ZM7 19l5 3M20 6l5 3" {...g} />],
    ['移出', <path key="a" d="M16 2a3 3 0 1 0 .1 0ZM13 9l7 4v2l-5-1v5l5 8h-3l-6-7-6 6-2-2 6-6ZM20 8h9v8h-9Z" {...g} fill="#ababab" />],
    ['删除', <path key="a" d="m5 5 20 20M25 5 5 25" fill="none" stroke="#858585" strokeWidth="5" />],
    ['停止', <path key="a" d="M1 0h28v30H1Z" fill="#b1b1b1" stroke="#8c8c8c" strokeWidth="2" />],
  ],
];

function PlaybackPanel() {
  return (
    <>
      <button className="mt-px flex h-[29px] shrink-0 items-center gap-2 border border-[#b9bdc9] bg-[#fcfcfd] pl-1 text-left font-bold text-[#30343a]">
        <svg viewBox="0 0 12 10" className="h-[10px] w-[10px]" aria-hidden="true">
          <path d="M0 0h12L6 10Z" fill="#4a5157" />
        </svg>
        回放
      </button>
      <div className="mt-px flex h-[91px] shrink-0 flex-col items-center gap-0.5 border border-[#c3c7cf] pt-1">
        {PLAYBACK.map((row, i) => (
          <div key={i} className="flex gap-px">
            {row.map(([label, art]) => (
              <button
                key={label}
                aria-label={label}
                className={`flex h-[39px] w-[43px] items-center justify-center border ${
                  label === '播放' ? 'border-[#b9bdc9] bg-white' : 'border-[#d3d6da] bg-[#eeefef]'
                }`}
              >
                <svg viewBox="0 0 30 30" className="size-[30px]" aria-hidden="true">
                  {art}
                </svg>
              </button>
            ))}
          </div>
        ))}
      </div>
    </>
  );
}

function ManagerPanel() {
  return (
    <aside className="flex w-[450px] shrink-0 flex-col pr-[3px] pb-px">
      <div className="flex h-[25px] shrink-0 items-center pl-[5px] text-[#3a3f44]">
        <h2 className="flex-1">管理器</h2>
        <button aria-label="固定" className="flex w-6 justify-center">
          <Icon name="pin" className="size-4" />
        </button>
        <button aria-label="关闭" className="mr-[3px] flex w-6 justify-center">
          <Icon name="closeGray" className="size-4" />
        </button>
      </div>
      <div className="flex min-h-0 flex-1">
        <nav className="flex w-10 shrink-0 flex-col pr-px pl-px">
          {STRIP.map((s, i) => (
            <button
              key={s.label}
              aria-label={s.label}
              className={`flex h-[60px] items-center justify-center ${
                i === 0 ? 'border border-r-0 border-[#b9bdc9] bg-[#fcfcfd]' : ''
              }`}
            >
              <svg viewBox="0 0 28 29" fill="none" className="h-[29px] w-7" aria-hidden="true">
                {s.art}
              </svg>
            </button>
          ))}
        </nav>
        <div className="flex min-w-0 flex-1 flex-col border border-[#b9bdc9] p-px">
          <div className="mt-px flex h-[30px] shrink-0 gap-px">
            <Combo label="显示" value="显示常用" className="h-full w-[186px]" />
            <input aria-label="过滤" className="h-full min-w-0 flex-1 border border-[#b9bdc9] bg-white px-1 outline-none" />
            <button aria-label="筛选" className="flex w-[30px] items-center justify-center border border-[#b9bdc9] bg-white">
              <Icon name="filter" />
            </button>
          </div>
          <HistoryTree />
          <PlaybackPanel />
        </div>
      </div>
    </aside>
  );
}

// Threaded shaft, drawn along its own axis and then tilted
function ShaftModel() {
  const turns = Array.from({ length: 15 }, (_, i) => 600 + i * 13.2);
  return (
    <svg
      viewBox="0 0 1467 755"
      preserveAspectRatio="xMidYMid meet"
      className="absolute inset-0 size-full"
      role="img"
      aria-label="零件模型"
    >
      <g transform="translate(367 253.500) rotate(8.500)" stroke="#15120a">
        <path d="M0-144H551V144H0A52 144 0 0 1 0-144Z" fill="url(#body)" stroke="none" />
        <path d="M7-143.500 0-144A52 144 0 0 0 0 144" fill="none" strokeWidth="1.200" />
        <ellipse cx="551" cy="0" rx="49.500" ry="144" fill="url(#chamfer)" />
        <ellipse cx="563" cy="0" rx="45.500" ry="131.500" fill="#664a00" />
        <path d="M563-78H584V78H563A27 78 0 0 1 563-78Z" fill="url(#body)" />
        <ellipse cx="585" cy="0" rx="30.500" ry="89" fill="url(#body)" />
        {turns.map((x, i) => (
          <g key={x}>
            <ellipse cx={x} cy="0" rx="34.500" ry="100" fill="url(#flank)" />
            {i < 14 && (
              <>
                <ellipse cx={x + 8} cy="0" rx="32" ry="91" fill="url(#groove)" strokeWidth=".8" />
                <ellipse cx={x + 10} cy="0" rx="32" ry="91" fill="url(#groove)" strokeWidth=".8" strokeDasharray="7 1 3 1" />
              </>
            )}
          </g>
        ))}
        <ellipse cx="783" cy="0" rx="33.500" ry="94" fill="url(#body)" />
        <path d="M760-28Q772-68 792-86" fill="none" />
        <path d="M760-28Q762-54 772-78" fill="none" strokeDasharray="2 1" />
        <path d="m768-78 7 7" stroke="#777" />
        <ellipse cx="798" cy="0" rx="31" ry="90" fill="url(#chamfer)" />
        <ellipse cx="810" cy="0" rx="27.500" ry="78.500" fill="#664a00" />
      </g>
      {/* part origin */}
      <g opacity=".65">
        <path d="m367 253 7-54-13 27 51 6-12 24M396 229l5 27M359 225l68 8" fill="none" stroke="#8d7230" opacity=".6" />
        <path d="m368 254-5-22" stroke="#7a5b42" strokeWidth="5" />
        <path d="m358 235 4-14 8 13Z" fill="#7a5b42" />
        <path d="m368 254 10-20" stroke="#5b8f14" strokeWidth="4" />
        <path d="m373 230 11-6-1 13Z" fill="#5da813" />
        <path d="m368 254 28 4" stroke="#e06a10" strokeWidth="4" />
        <path d="m394 252 14 8-14 2Z" fill="#e06a10" />
      </g>
      {/* view triad */}
      <g transform="translate(1 0)">
        <path d="m56 699 35 5" stroke="#f00000" strokeWidth="4" />
        <path d="m85 699 13 6-14 4Z" fill="#f00000" stroke="#7a0000" strokeWidth=".6" />
        <path d="m57 698 11-19" stroke="#00d000" strokeWidth="4" />
        <path d="m61 680 12-12-1 14-5 2Z" fill="#00b800" stroke="#005500" strokeWidth=".6" />
        <path d="m56 699-4-23" stroke="#0000c8" strokeWidth="5" />
        <path d="m45 680 5-14 6 12-5 3Z" fill="#0000ff" stroke="#00006b" strokeWidth=".6" />
        <g fontFamily="Noto Sans, sans-serif" fontSize="21">
          <text x="43" y="668" fill="#0000ff">Z</text>
          <text x="68" y="670" fill="#00ff00">Y</text>
          <text x="100" y="713" fill="#ff0000">X</text>
        </g>
      </g>
    </svg>
  );
}

const VIEW_TOOLS = [
  ['exit'], ['viewBook', true], ['eraser'], ['boxTop'], ['shaded', true], ['wire', true],
  ['section', true], ['zoomDoc', true], ['fit'], ['dimension', true], ['display', true],
];

function ViewTool({ label, caret, children }) {
  return (
    <button aria-label={label} className="flex shrink-0 items-center">
      <span className="flex w-[29px] justify-center">{children}</span>
      {caret && <Caret className="mr-2" />}
    </button>
  );
}

function SpeedBall() {
  return (
    <div className="absolute right-[85px] bottom-[182px] flex items-center">
      <div className="-mr-5 flex h-[50px] w-[90px] flex-col justify-center rounded-l-full bg-white pl-[14px] text-[11px] leading-[18px] text-[#666] shadow-md">
        <span className="whitespace-pre"><span className="text-[#2fb344]">↑</span> 6   K/s</span>
        <span className="whitespace-pre"><span className="text-[#f28a2e]">↓</span> 300 K/s</span>
      </div>
      <div className="relative flex size-[68px] items-center justify-center rounded-full bg-white shadow-md">
        <svg viewBox="0 0 68 68" className="absolute inset-0 size-full" aria-hidden="true">
          <path d="M35 63A29 29 0 1 1 52 57" fill="none" stroke="#f5393d" strokeWidth="2.500" strokeLinecap="round" />
        </svg>
        <span className="font-['Open_Sans',sans-serif] text-[28px] leading-8 text-black">89</span>
        <span className="mt-3 text-[10px] leading-3 text-black">%</span>
      </div>
    </div>
  );
}

function Viewport() {
  return (
    <main className="flex min-w-0 flex-1 flex-col">
      <div className="flex h-[27px] shrink-0 items-end border-b border-[#b9bdc9] pl-0.5">
        <div className="-mb-px flex h-[27px] w-[149px] items-center gap-2 border border-b-0 border-[#b9bdc9] bg-[#fdfdfd] pb-0.5 pl-[17px]">
          <svg viewBox="0 0 12 12" className="size-3" aria-hidden="true">
            <path d="M6 0v12M0 6h12" stroke="#75642d" strokeWidth="2.500" />
          </svg>
          <span className="text-[#15181b]">零件001.Z3</span>
          <button aria-label="关闭零件">
            <svg viewBox="0 0 12 12" className="size-3" aria-hidden="true">
              <path d="m1 1 10 10M11 1 1 11" stroke="#7f6f38" strokeWidth="2.500" />
            </svg>
          </button>
        </div>
        <button aria-label="新建" className="mb-[7px] ml-[10px]">
          <svg viewBox="0 0 12 12" className="size-3" aria-hidden="true">
            <path d="M6 0v12M0 6h12" stroke="#a39c9e" strokeWidth="2" />
          </svg>
        </button>
        <button aria-label="页签菜单" className="mr-1 mb-1 ml-auto">
          <Icon name="tabMenu" className="size-4" />
        </button>
      </div>
      <div className="relative mr-0.5 mb-0.5 min-h-0 flex-1 bg-linear-to-b from-white to-[#9f9f9f]">
        <ShaftModel />
        <div className="relative flex items-start pl-[21px]">
          <p className="w-[378px] shrink-0 pt-[5px] leading-5 text-black">
            您可以在自定义设置里设置热键
            <br />
            单击"帮助/显示提示"按钮来取消这些提示.
          </p>
          <div className="flex h-[30px] items-center">
            {VIEW_TOOLS.map(([name, caret]) => (
              <ViewTool key={name} label={name} caret={caret}>
                <Icon name={name} />
              </ViewTool>
            ))}
            <ViewTool label="线条颜色">
              <span className="h-3 w-5 border border-[#444] bg-black" />
            </ViewTool>
            <ViewTool label="面颜色">
              <span className="size-5 border border-[#0a2b87] bg-[#ffbc00]" />
            </ViewTool>
            <ViewTool label="图层" caret>
              <Icon name="layers" />
            </ViewTool>
            <div className="relative flex h-[26px] w-[144px] items-center border border-[#b9bdc9] bg-white">
              <Icon name="bulb" className="pointer-events-none absolute left-[6px] size-[18px]" />
              <Icon name="sun" className="pointer-events-none absolute left-[25px] size-4" />
              <select aria-label="当前图层" className="h-full w-full appearance-none bg-transparent pl-12 text-black outline-none">
                <option>图层0000</option>
              </select>
              <Caret className="absolute right-[6px]" />
            </div>
          </div>
        </div>
        <span className="absolute bottom-0 left-[5px] font-['Noto_Sans',sans-serif] text-[21px] leading-[26px] text-black">
          63.1226 mm
        </span>
        <SpeedBall />
      </div>
    </main>
  );
}

function StatusBar() {
  return (
    <footer className="flex h-[33px] shrink-0 items-center">
      <span className="flex-1 pl-[6px] text-[#3a3f44]">选择命令或实体</span>
      <span className="h-[30px] w-px bg-[#8f9499]" />
      <button aria-label="工具箱" className="ml-[17px] flex h-6 w-[25px] items-center justify-center border border-[#c9982f] bg-[#fde27c]">
        <svg viewBox="0 0 18 18" className="size-[18px]" aria-hidden="true">
          <path d="M1 1h16v16H1Z" fill="#fff" stroke="#3a6fc4" strokeWidth="1.500" />
          <path d="M1 1h16v3H1Z" fill="#4b83da" />
          <path d="M4 6v9" stroke="#3a6fc4" strokeWidth="2" strokeDasharray="1 1" />
          <path d="M8 7q3-2 6-1l2 2" stroke="#444" strokeWidth="2" fill="none" />
          <path d="M12 8v8" stroke="#c8232c" strokeWidth="2.500" />
        </svg>
      </button>
      <button aria-label="显示器" className="flex w-11 justify-center">
        <svg viewBox="0 0 20 20" className="size-5" aria-hidden="true">
          <path d="M1 2h18v12H1Z" fill="#2fb9d3" stroke="#2c6774" />
          <path d="M7 14h6v3h2v2H5v-2h2Z" fill="#4c4c4c" />
        </svg>
      </button>
      <button aria-label="输出" className="mr-[10px] flex w-[26px] justify-center">
        <svg viewBox="0 0 18 18" className="size-[18px]" aria-hidden="true">
          <path d="M1 1h16v16H1Z" fill="#e9effa" stroke="#5e8bd4" strokeWidth="1.500" />
          <path d="M1 1h16v3H1Z" fill="#4b83da" />
          <path d="M4 8h10M4 11h10M4 14h7" stroke="#77808b" />
        </svg>
      </button>
      <input aria-label="命令输入" className="h-7 w-[438px] border border-[#b9bdc9] bg-white px-1 outline-none" />
    </footer>
  );
}

const APPS = [
  {
    label: '浏览器',
    art: (
      <>
        <circle cx="14" cy="15" r="12" fill="#43b52b" stroke="#e8f3e4" />
        <path d="M22 15H8q0-7 6-7t7 7M8 16q1 7 7 6 4-1 5-3" fill="none" stroke="#fff" strokeWidth="3" />
        <path d="M26 1Q14 0 7 11T4 29q-5-4 0-14T21 1ZM26 1q2 3-1 8" fill="#7ccb2c" stroke="#5cb224" />
      </>
    ),
  },
  {
    label: '文件资源管理器',
    art: (
      <>
        <path d="M1 1h10l3 3H1Z" fill="#dd9708" />
        <path d="M1 4h26v22H1Z" fill="#ffd25e" />
        <path d="M6 15h17v13h-5v-6h-7v6H6Z" fill="#3b93dd" />
      </>
    ),
  },
  {
    label: '微信',
    art: (
      <>
        <path d="M10 2C4 2 0 6 0 11q0 4 4 7l-1 4 5-3q12 1 13-7Q21 2 10 2Z" fill="#62c92e" />
        <path d="M20 11q9 1 9 8 0 3-3 5l1 4-4-2q-11 1-12-7 1-8 9-8Z" fill="#f3f5f4" />
        <path d="M6 7h2v2H6ZM13 7h2v2h-2Z" fill="#1f5510" />
        <path d="M16 16h2v2h-2ZM22 16h2v2h-2Z" fill="#444" />
      </>
    ),
  },
  {
    label: '中望3D',
    art: (
      <>
        <path d="M1 3h26l-4 14-7 10h-4L5 17Z" fill="#0b3f5e" />
        <path d="M1 3h7l5 12-4 7-4-5Z" fill="#1488cf" />
        <path d="m27 3-10 24h-3l-1-5 8-19Z" fill="#2794ea" />
        <circle cx="13" cy="3" r="3" fill="#f2f5f7" stroke="#556" strokeWidth=".6" />
        <path d="m12 5 3 1-1 6-5 5-3-3 5-4Z" fill="#f3f6f8" stroke="#556" strokeWidth=".6" />
        <path d="m22 8-6 11 6 2" fill="none" stroke="#fff" strokeWidth="1.800" />
        <ellipse cx="14" cy="28.500" rx="7" ry="1.300" fill="#0007" />
      </>
    ),
  },
];

function TaskBar() {
  return (
    <div className="relative flex h-[49px] shrink-0 items-stretch bg-linear-to-r from-[#ced7df] to-[#d1dae3]">
      <button aria-label="开始" className="flex w-[63px] items-center justify-center">
        <svg viewBox="0 0 20 20" className="mr-0.5 size-5" aria-hidden="true">
          <path d="m0 3 8-1v7H0ZM9 2l11-2v9H9ZM0 10h8v8l-8-1ZM9 10h11v10L9 18Z" fill="#000" />
        </svg>
      </button>
      {APPS.map((a) => (
        <button
          key={a.label}
          aria-label={a.label}
          className={`flex w-[62px] flex-col items-center ${a.label === '中望3D' ? 'bg-[#edf1f5]' : ''}`}
        >
          <svg viewBox="-1 0 30 30" className="mt-[11px] size-[30px]" aria-hidden="true">
            {a.art}
          </svg>
          <span className={`mt-auto h-0.5 bg-[#76b9ed] ${a.label === '中望3D' ? 'w-full' : 'w-[51px]'}`} />
        </button>
      ))}
      <div className="ml-auto flex items-center">
        <svg viewBox="0 0 14 28" className="h-7 w-[14px]" aria-hidden="true">
          <path d="M4 1h2v6h2V1h2v6h3v7q0 5-4 6v7H6v-7q-4-1-4-6V7h2Z" fill="#fff" stroke="#858b90" />
        </svg>
        <span className="ml-0.5 flex h-[23px] w-[43px] items-center justify-center border-2 border-white bg-linear-to-r from-[#18964a] from-65% to-[#8b9096] to-65% text-[13px] leading-4 text-white outline outline-[#858b90]">
          71%
        </span>
        <span className="h-3 w-1 bg-white outline outline-[#858b90]" />
        <button aria-label="更多" className="mr-[30px] flex w-[30px] justify-center">
          <svg viewBox="0 0 16 16" className="size-4" aria-hidden="true">
            <path d="m1 12 7-8 7 8" fill="none" stroke="#111" strokeWidth="1.500" />
          </svg>
        </button>
        <button aria-label="电源" className="flex w-[30px] justify-center">
          <svg viewBox="0 0 20 20" className="size-5" aria-hidden="true">
            <path d="M5 6h13v9H6M19 9v3" fill="none" stroke="#111" strokeWidth="1.500" />
            <path d="M7 8h5v5H7ZM1 4h5v4l-2 2v4H3v-4L1 8ZM2 2v2M5 2v2" fill="#111" stroke="#111" strokeWidth=".7" />
          </svg>
        </button>
        <button aria-label="网络" className="flex w-[30px] justify-center">
          <svg viewBox="0 0 20 20" className="size-5" aria-hidden="true">
            <path d="M2 17Q3 4 17 3M6 18Q7 8 17 7M10 18q1-7 7-7M13 18q0-3 4-4" fill="none" stroke="#333" strokeWidth="1.300" />
          </svg>
        </button>
        <button aria-label="音量" className="flex w-[30px] justify-center">
          <svg viewBox="0 0 20 20" className="size-5" aria-hidden="true">
            <path d="M1 7h3l5-4v14l-5-4H1ZM12 7q2 3 0 6M14 5q4 5 0 10M17 3q5 7 0 14" fill="none" stroke="#111" strokeWidth="1.300" />
          </svg>
        </button>
        <button aria-label="输入法" className="w-[30px] pb-1 text-base text-[#333]">中</button>
        <div className="w-[88px] text-center text-base leading-6 text-[#111]">
          <div>21:26</div>
          <div>2020/10/8</div>
        </div>
        <button aria-label="通知" className="flex w-[56px] justify-center">
          <svg viewBox="0 0 20 22" className="h-[22px] w-5" aria-hidden="true">
            <path d="M1 2h18v14h-5l-3 4-3-4H1Z" fill="none" stroke="#111" strokeWidth="1.500" />
          </svg>
        </button>
        <span className="mr-[3px] ml-2 h-full w-px bg-[#aab2ba]" />
      </div>
      <span className="pointer-events-none absolute right-[10px] bottom-[8px] font-['Liberation_Sans',sans-serif] text-base leading-5 whitespace-nowrap text-white/70">
        https://blog.csdn.net/weixin_43911798
      </span>
    </div>
  );
}

function App() {
  const [tab, setTab] = useState('造型');

  return (
    <div className="flex h-screen flex-col overflow-hidden bg-[#e1e5e8] font-['Noto_Sans_CJK_SC',sans-serif] text-[15px] leading-5">
      <SharedDefs />
      <TitleBar />
      <MenuTabs active={tab} onSelect={setTab} />
      <Ribbon />
      <SelectionBar />
      <div className="flex min-h-0 flex-1">
        <ManagerPanel />
        <Viewport />
      </div>
      <StatusBar />
      <TaskBar />
    </div>
  );
}

export default App;
